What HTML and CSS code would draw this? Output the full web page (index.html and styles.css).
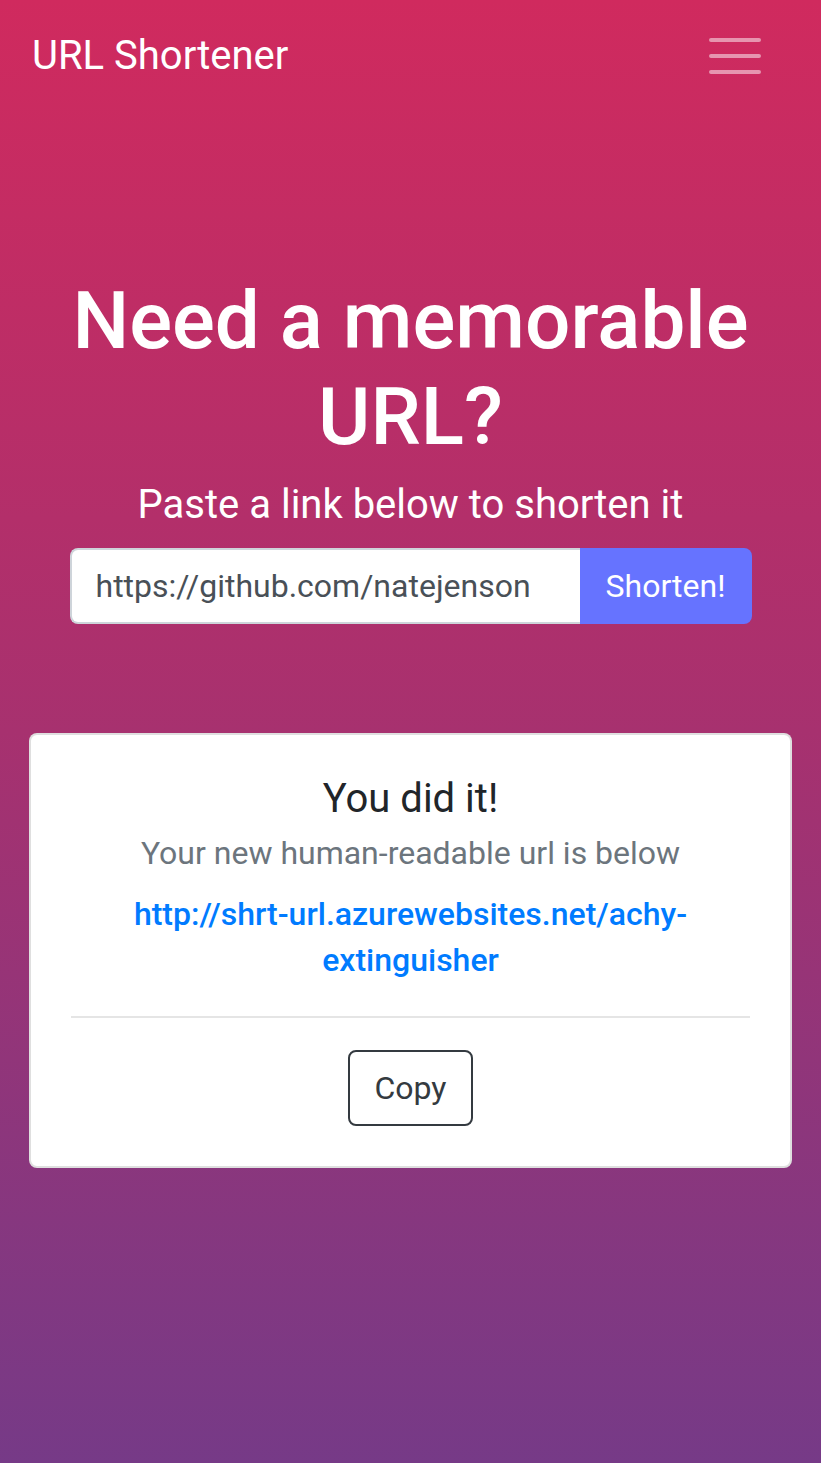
FILE: index.html
```html
<!DOCTYPE html>
<html lang="en">
<head>
<meta charset="utf-8">
<title>URL Shortener</title>
<link rel="stylesheet" href="styles.css">
</head>
<body>
<nav class="navbar">
  <a class="brand" href="#">URL Shortener</a>
  <button class="toggler" type="button" aria-label="Toggle navigation">
    <svg class="toggler-icon" viewBox="0 0 52 40" width="52" height="40">
      <path d="M2 4h48M2 20h48M2 36h48" stroke="rgba(255,255,255,0.5)" stroke-width="4" stroke-linecap="round" fill="none"/>
    </svg>
  </button>
</nav>
<main class="container">
  <section class="hero">
    <h1 class="title">Need a memorable URL?</h1>
    <p class="lead">Paste a link below to shorten it</p>
    <form class="input-group">
      <input class="form-control" type="text" value="https://github.com/natejenson">
      <button class="btn-shorten" type="button">Shorten!</button>
    </form>
  </section>
  <section class="card">
    <h5 class="card-title">You did it!</h5>
    <p class="card-subtitle">Your new human-readable url is below</p>
    <a class="short-link" href="#">http://shrt-url.azurewebsites.net/achy-extinguisher</a>
    <hr class="divider">
    <button class="btn-copy" type="button">Copy</button>
  </section>
</main>
</body>
</html>
```
FILE: styles.css
```css
html {
  min-height: 100%;
  background: linear-gradient(180deg, #d02a5e 0%, #a7316f 50%, #763a87 100%);
}
body {
  margin: 0;
  min-height: 1463px;
  font-family: Roboto, "Noto Sans", "Liberation Sans", sans-serif;
  color: #212529;
}
.navbar {
  display: flex;
  align-items: center;
  justify-content: space-between;
  padding: 16px 32px;
  height: 80px;
}
.brand {
  color: #fff;
  text-decoration: none;
  font-size: 40px;
  line-height: 60px;
}
.toggler {
  background: transparent;
  border: 0;
  padding: 0;
  margin-right: 28px;
  width: 52px;
  height: 40px;
}
.toggler-icon {
  display: block;
  width: 52px;
  height: 40px;
}
.container {
  display: flex;
  flex-direction: column;
  align-items: center;
  padding: 0 29px;
}
.hero {
  display: flex;
  flex-direction: column;
  align-items: center;
  width: 682px;
  padding-top: 161px;
}
.title {
  margin: 0;
  color: #fff;
  font-size: 80px;
  font-weight: 500;
  line-height: 96px;
  text-align: center;
}
.lead {
  margin: 16px 0 19px;
  color: #fff;
  font-size: 40px;
  line-height: 48px;
  text-align: center;
}
.input-group {
  display: flex;
  width: 682px;
  height: 76px;
  margin: 0;
}
.form-control {
  flex: 1;
  min-width: 0;
  box-sizing: border-box;
  height: 76px;
  padding: 12px 24px;
  border: 2px solid #ced4da;
  border-right: 0;
  border-radius: 8px 0 0 8px;
  font-family: inherit;
  font-size: 32px;
  color: #495057;
  background: #fff;
}
.btn-shorten {
  width: 172px;
  height: 76px;
  border: 0;
  border-radius: 0 8px 8px 0;
  background: #6673ff;
  color: #fff;
  font-family: inherit;
  font-size: 32px;
  padding: 0;
}
.card {
  box-sizing: border-box;
  width: 763px;
  margin-top: 109px;
  padding: 40px;
  background: #fff;
  border: 2px solid rgba(0,0,0,0.125);
  border-radius: 8px;
  display: flex;
  flex-direction: column;
  align-items: center;
  text-align: center;
}
.card-title {
  margin: 0;
  font-size: 40px;
  font-weight: 400;
  line-height: 48px;
  color: #212529;
}
.card-subtitle {
  margin: 6px 0 0;
  font-size: 32px;
  line-height: 48px;
  color: #6c757d;
}
.short-link {
  margin-top: 14px;
  font-size: 32px;
  font-weight: 500;
  line-height: 46px;
  color: #007bff;
  text-decoration: none;
}
.divider {
  align-self: stretch;
  margin: 33px 0 32px;
  border: 0;
  border-top: 2px solid rgba(0,0,0,0.1);
}
.btn-copy {
  box-sizing: border-box;
  height: 76px;
  padding: 12px 24px;
  border: 2px solid #343a40;
  border-radius: 8px;
  background: #fff;
  color: #343a40;
  font-family: inherit;
  font-size: 32px;
  line-height: 48px;
}
```
